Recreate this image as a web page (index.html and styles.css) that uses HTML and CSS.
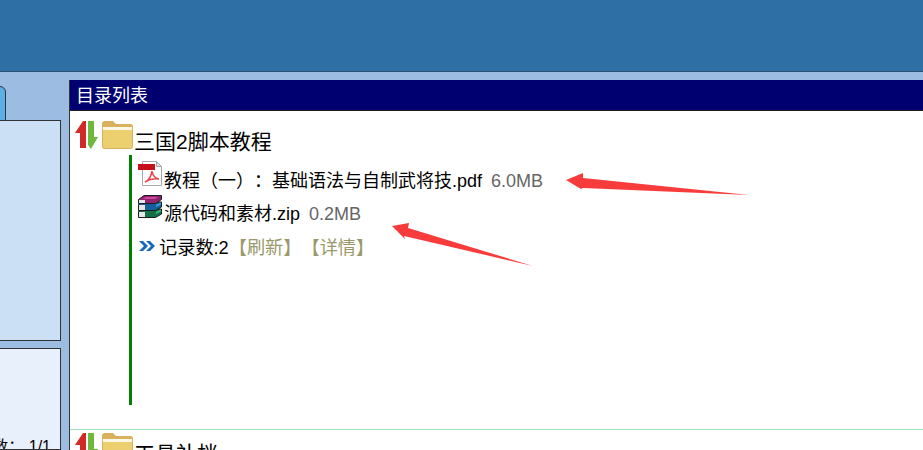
FILE: index.html
```html
<!DOCTYPE html>
<html lang="zh">

<head>
    <meta charset="utf-8">
    <title>目录列表</title>
    <link rel="stylesheet" href="styles.css">
</head>

<body>
    <div class="topbar"></div>
    <div class="main">
        <div class="side">
            <div class="tab"></div>
            <div class="side-box"></div>
            <div class="side-box side-info"><span>数： 1/1</span></div>
        </div>
        <div class="panel">
            <div class="panel-title">目录列表</div>
            <div class="group">
                <div class="group-head">
                    <svg class="sort" width="24" height="30" viewBox="0 0 24 30">
                        <path d="M0 12 8 0h3v27H5V12z" fill="#cf2a25"/>
                        <path d="M13 0h6v16h4l-7 12-3-4z" fill="#6fb83c"/>
                    </svg>
                    <svg class="folder" width="31" height="28" viewBox="0 0 31 28">
                        <path d="M0 3q0-3 3-3h8l3 3h14q3 0 3 3v19q0 3-3 3H3q-3 0-3-3z" fill="#d9b05e"/>
                        <path d="M1 6h29v3H1z" fill="#fbf6e6"/>
                        <path d="M1 9h29v16q0 2-2 2H3q-2 0-2-2z" fill="#ecd070"/>
                    </svg>
                    <span class="group-name">三国2脚本教程</span>
                </div>
                <div class="files">
                    <div class="file">
                        <svg class="icon" width="26" height="26" viewBox="0 0 26 26">
                            <path d="M4.500 .5h14l5 5v19h-19z" fill="#fff" stroke="#a8a8a8"/>
                            <path d="M18.500 .5v5h5z" fill="#ddd" stroke="#a8a8a8"/>
                            <path d="M0 3h17v6H0z" fill="#c8101a"/>
                            <path d="M7 21q6-3 7-11 1 7 7 8-8-1-14 3z" fill="none" stroke="#e4474d" stroke-width="1.600"/>
                        </svg>
                        <span>教程（一）：基础语法与自制武将技.pdf</span><span class="size">6.0MB</span>
                    </div>
                    <div class="file">
                        <svg class="icon" width="26" height="26" viewBox="0 0 26 26">
                            <path d="M.5 17.500 5 15h18.500v5l-6 3.500H.5z" fill="#157048" stroke="#1c1c1c"/>
                            <path d="M1 18h6v5H1z" fill="#e6e6e6"/>
                            <path d="M18 18l5-2.500v2L18 20z" fill="#3cb878"/>
                            <path d="M.5 10.500 5 8h18.500v5l-6 3.500H.5z" fill="#15609c" stroke="#1c1c1c"/>
                            <path d="M1 11h6v5H1z" fill="#e6e6e6"/>
                            <path d="M18 11l5-2.500v2L18 13z" fill="#3aa0d8"/>
                            <path d="M.5 5.500 6 1.500h17.500v4l-6 4H.5z" fill="#8e2470" stroke="#1c1c1c"/>
                            <path d="M8 3h12l-3 2H5z" fill="#d0479f"/>
                            <path d="M1 6h6v3H1z" fill="#e6e6e6"/>
                        </svg>
                        <span>源代码和素材.zip</span><span class="size">0.2MB</span>
                    </div>
                    <div class="count">
                        <svg class="more" width="18" height="12" viewBox="0 0 18 12">
                            <path d="M1 1l5 5-5 5h4l5-5-5-5zM8 1l5 5-5 5h4l5-5-5-5z" fill="#1668bd"/>
                        </svg>
                        <span>记录数:2</span><span class="links">【刷新】【详情】</span>
                    </div>
                </div>
            </div>
            <div class="group group-next">
                <div class="group-head">
                    <svg class="sort" width="24" height="30" viewBox="0 0 24 30">
                        <path d="M0 12 8 0h3v27H5V12z" fill="#cf2a25"/>
                        <path d="M13 0h6v16h4l-7 12-3-4z" fill="#6fb83c"/>
                    </svg>
                    <svg class="folder" width="31" height="28" viewBox="0 0 31 28">
                        <path d="M0 3q0-3 3-3h8l3 3h14q3 0 3 3v19q0 3-3 3H3q-3 0-3-3z" fill="#d9b05e"/>
                        <path d="M1 6h29v3H1z" fill="#fbf6e6"/>
                        <path d="M1 9h29v16q0 2-2 2H3q-2 0-2-2z" fill="#ecd070"/>
                    </svg>
                    <span class="group-name">工具补档</span>
                </div>
            </div>
        </div>
    </div>
    <svg class="arrows" width="923" height="450" viewBox="0 0 923 450">
        <path d="M566 180 583 173 583 178 749 195 583 188 581 189z" fill="#f83c3c"/>
        <path d="M392 226 409 223 408 228 533 266 404 236 405 239z" fill="#f83c3c"/>
    </svg>
</body>

</html>
```

FILE: styles.css
```css
html, body {
    height: 450px;
    margin: 0;
    overflow: hidden;
}

body {
    background: #9dbce2;
    font-family: "Liberation Sans", "Noto Sans CJK SC", sans-serif;
    font-size: 18px;
    position: relative;
    text-spacing-trim: space-all;
}

.topbar {
    background: #2e6fa5;
    border-bottom: 1px solid #2b4f73;
    height: 71px;
}

.main {
    display: flex;
    gap: 8px;
    height: 370px;
    padding-top: 8px;
}

.side {
    display: flex;
    flex-direction: column;
    flex: none;
    width: 61px;
}

.tab {
    background: #5cb0ea;
    border: 1px solid #333;
    border-radius: 0 6px 0 0;
    height: 33px;
    margin: 6px 0 -1px -1px;
    position: relative;
    width: 5px;
}

.side-box {
    background: #cce0f5;
    border: 1px solid #333;
    border-left: 0;
    height: 219px;
}

.side-info {
    background: #e8f0fc;
    flex: 1;
    font-size: 16px;
    margin-top: 7px;
    overflow: hidden;
    position: relative;
}

.side-info span {
    bottom: -8px;
    position: absolute;
    right: 9px;
    white-space: pre;
}

.panel {
    background: #fff;
    border-left: 1px solid #333;
    flex: 1;
    overflow: hidden;
}

.panel-title {
    background: #000070;
    border-bottom: 1px solid #222;
    color: #fff;
    font-size: 18px;
    height: 30px;
    line-height: 32px;
    padding-left: 6px;
}

.group {
    box-sizing: border-box;
    height: 318px;
    padding: 10px 0 0 5px;
}

.group-next {
    border-top: 1px solid #a5dfb8;
    height: auto;
    padding-top: 3px;
}

.group-head {
    align-items: flex-start;
    display: flex;
    height: 34px;
}

.sort {
    flex: none;
    margin-right: 3px;
}

.group-name {
    font-size: 21px;
    line-height: 26px;
    margin: 8px 0 0 1px;
}

.files {
    border-left: 3px solid #008000;
    height: 244px;
    margin-left: 54px;
    padding: 6px 0 0 6px;
}

.file {
    align-items: flex-end;
    display: flex;
    height: 33px;
}

.icon {
    flex: none;
    margin-bottom: 7px;
}

.file span {
    line-height: 26px;
}

.size {
    color: #666;
    margin-left: 9px;
}

.count {
    align-items: center;
    display: flex;
    font-size: 18.200px;
    height: 33px;
    padding-top: 2px;
}

.more {
    flex: none;
    margin-right: 3px;
}

.links {
    color: #99996b;
}

.arrows {
    left: 0;
    pointer-events: none;
    position: absolute;
    top: 0;
}
```
